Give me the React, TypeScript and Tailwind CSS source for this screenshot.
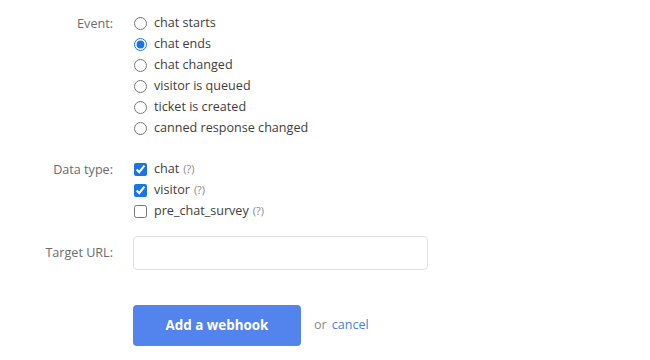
import React from "react";

const events = [
  "chat starts",
  "chat ends",
  "chat changed",
  "visitor is queued",
  "ticket is created",
  "canned response changed",
];

const dataTypes = [
  { name: "chat", checked: true },
  { name: "visitor", checked: true },
  { name: "pre_chat_survey", checked: false },
];

export default function App() {
  return (
    <div
      className="w-[650px] h-[360px] bg-white text-[12.6px] text-[#3d3d3d] overflow-hidden"
      style={{ fontFamily: '"Open Sans", "Noto Sans", sans-serif' }}
    >
      <div className="pt-[12px] flex flex-col">
        <div className="flex">
          <div className="w-[113px] text-right text-[#6b6b6b] leading-[21px] pt-[1px]">Event:</div>
          <div className="ml-[21px] flex flex-col">
            {events.map((e, i) => (
              <label key={e} className="flex items-center h-[21px] pt-[1px]">
                <input
                  type="radio"
                  name="event"
                  defaultChecked={i === 1}
                  className="m-0 w-[13px] h-[13px] accent-[#1a73e8]"
                />
                <span className="ml-[7px]">{e}</span>
              </label>
            ))}
          </div>
        </div>

        <div className="flex mt-[20px]">
          <div className="w-[113px] text-right text-[#6b6b6b] leading-[21px] pt-[1px]">Data type:</div>
          <div className="ml-[21px] flex flex-col">
            {dataTypes.map((d) => (
              <label key={d.name} className="flex items-center h-[21px] pt-[1px]">
                <input
                  type="checkbox"
                  defaultChecked={d.checked}
                  className="m-0 w-[13px] h-[13px] accent-[#1a73e8]"
                />
                <span className="ml-[7px]">{d.name}</span>
                <span className="ml-[4px] text-[11px] text-[#8a8a8a]">(?)</span>
              </label>
            ))}
          </div>
        </div>

        <div className="flex items-center mt-[15px]">
          <div className="w-[113px] text-right text-[#6b6b6b]">Target URL:</div>
          <input
            type="text"
            className="ml-[20px] w-[295px] h-[34px] border border-[#e0e0e0] rounded-[4px] outline-none px-2"
          />
        </div>

        <div className="flex items-center mt-[35px] ml-[133px]">
          <button className="w-[168px] h-[41px] rounded-[4px] bg-[#5383ec] text-white font-bold text-[13.4px]">
            Add a webhook
          </button>
          <span className="ml-[13px] text-[#8a8a8a]">or</span>
          <span className="ml-[5px] text-[#4a7ce8]">cancel</span>
        </div>
      </div>
    </div>
  );
}
